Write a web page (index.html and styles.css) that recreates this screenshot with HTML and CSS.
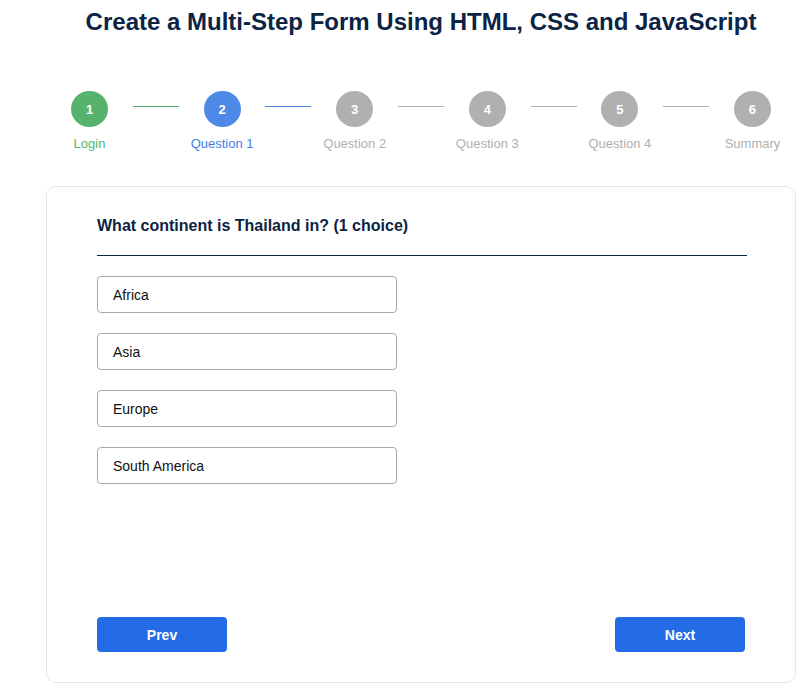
FILE: index.html
```html
<!DOCTYPE html>
<html lang="en">
<head>
<meta charset="utf-8">
<title>Multi-Step Form</title>
<link rel="stylesheet" href="styles.css">
</head>
<body>
<div class="page">
  <h1 class="title">Create a Multi-Step Form Using HTML, CSS and JavaScript</h1>
  <div class="steps">
    <div class="step done"><div class="circle">1</div><div class="label">Login</div></div>
    <div class="connector done"></div>
    <div class="step active"><div class="circle">2</div><div class="label">Question 1</div></div>
    <div class="connector active"></div>
    <div class="step"><div class="circle">3</div><div class="label">Question 2</div></div>
    <div class="connector"></div>
    <div class="step"><div class="circle">4</div><div class="label">Question 3</div></div>
    <div class="connector"></div>
    <div class="step"><div class="circle">5</div><div class="label">Question 4</div></div>
    <div class="connector"></div>
    <div class="step"><div class="circle">6</div><div class="label">Summary</div></div>
  </div>
  <div class="card">
    <h2 class="question">What continent is Thailand in? (1 choice)</h2>
    <div class="divider"></div>
    <div class="options">
      <div class="option">Africa</div>
      <div class="option">Asia</div>
      <div class="option">Europe</div>
      <div class="option">South America</div>
    </div>
    <div class="actions">
      <button class="btn">Prev</button>
      <button class="btn">Next</button>
    </div>
  </div>
</div>
</body>
</html>
```
FILE: styles.css
```css
* { box-sizing: border-box; }
html, body { margin: 0; padding: 0; background: #fff; }
body { font-family: "Liberation Sans", Arial, Helvetica, sans-serif; }
.page {
  width: 750px;
  margin-left: 46px;
  display: flex;
  flex-direction: column;
  align-items: center;
}
.title {
  margin: 8px 0 0;
  font-size: 24px;
  line-height: 28px;
  font-weight: 700;
  color: #0b2344;
  white-space: nowrap;
}
.steps {
  display: flex;
  align-items: flex-start;
  margin-top: 55px;
  height: 95px;
}
.step {
  width: 37px;
  display: flex;
  flex-direction: column;
  align-items: center;
}
.circle {
  width: 37px;
  height: 36px;
  border-radius: 50%;
  background: #b0b0b0;
  color: #fff;
  font-size: 13px;
  font-weight: 700;
  display: flex;
  align-items: center;
  justify-content: center;
}
.label {
  margin-top: 9px;
  font-size: 13px;
  line-height: 16px;
  color: #b0b0b0;
  white-space: nowrap;
}
.connector {
  width: 46px;
  height: 1px;
  margin: 15px 24.8px 0;
  background: #b0b0b0;
}
.step.done .circle, .connector.done { background: #55b36d; }
.step.done .label { color: #55b36d; }
.step.active .circle { background: #4f89e8; }
.connector.active { background: #4a85e6; }
.step.active .label { color: #3f7ee6; }
.card {
  width: 750px;
  border: 1px solid #e6e6e6;
  border-radius: 10px;
  padding: 29px 50px 30px;
  display: flex;
  flex-direction: column;
}
.question {
  margin: 0;
  font-size: 16px;
  line-height: 20px;
  font-weight: 700;
  color: #0b2344;
}
.divider {
  height: 1px;
  background: #0b2344;
  margin: 19px -2px 20px 0;
}
.options {
  display: flex;
  flex-direction: column;
  gap: 20px;
}
.option {
  width: 300px;
  height: 37px;
  border: 1px solid #aaaaaa;
  border-radius: 4px;
  padding: 0 15px;
  display: flex;
  align-items: center;
  font-size: 14px;
  color: #111;
}
.actions {
  display: flex;
  justify-content: space-between;
  margin-top: 133px;
}
.btn {
  width: 130px;
  height: 35px;
  border: none;
  border-radius: 4px;
  background: #236ce6;
  color: #fff;
  font-family: "Liberation Sans", Arial, Helvetica, sans-serif;
  font-size: 14px;
  font-weight: 700;
  padding: 0;
}
```
